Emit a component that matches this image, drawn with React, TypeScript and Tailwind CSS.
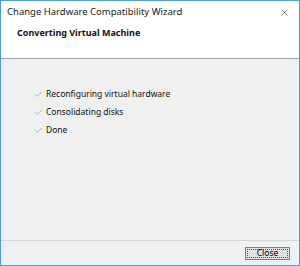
import { Check, X } from 'lucide-react'

const steps = ['Reconfiguring virtual hardware', 'Consolidating disks', 'Done']

export default function App() {
  return (
    <div
      className="w-[300px] h-[266px] flex flex-col border border-[#4a9de0] bg-[#f0f0f0] text-[#000]"
      style={{ fontFamily: '"Noto Sans", "Open Sans", Arial, sans-serif' }}
    >
      {/* Title bar + header */}
      <div className="bg-white h-[57px] flex flex-col">
        <div className="h-[22px] flex items-center justify-between pl-[6px] pr-[9px]">
          <span className="text-[9.5px] text-[#1a1a1a] pt-[1px]">Change Hardware Compatibility Wizard</span>
          <X className="w-[11px] h-[11px] text-[#333]" strokeWidth={1.3} />
        </div>
        <div className="pl-[16px] pt-[3px] text-[9px] font-bold text-[#111]">Converting Virtual Machine</div>
      </div>
      <div className="h-[1px] bg-[#a0a0a0]" />

      {/* Body */}
      <div className="flex-1 flex flex-col gap-[7px] pl-[33px] pt-[30px]">
        {steps.map((s) => (
          <div key={s} className="flex items-center gap-[3px] h-[11px]">
            <Check className="w-[9px] h-[9px] text-[#7a7a7a]" strokeWidth={1.4} />
            <span className="text-[8.5px] text-[#111]">{s}</span>
          </div>
        ))}
      </div>

      {/* Footer */}
      <div className="h-[1px] bg-[#d6d6d6]" />
      <div className="h-[24px] flex items-center justify-end pr-[9px]">
        <button className="w-[45px] h-[13px] border border-[#3c8fd8] bg-[#e1e1e1] p-[1px] flex">
          <span className="flex-1 flex items-center justify-center border border-dotted border-[#555] text-[8.5px] leading-none">
            Close
          </span>
        </button>
      </div>
    </div>
  )
}
